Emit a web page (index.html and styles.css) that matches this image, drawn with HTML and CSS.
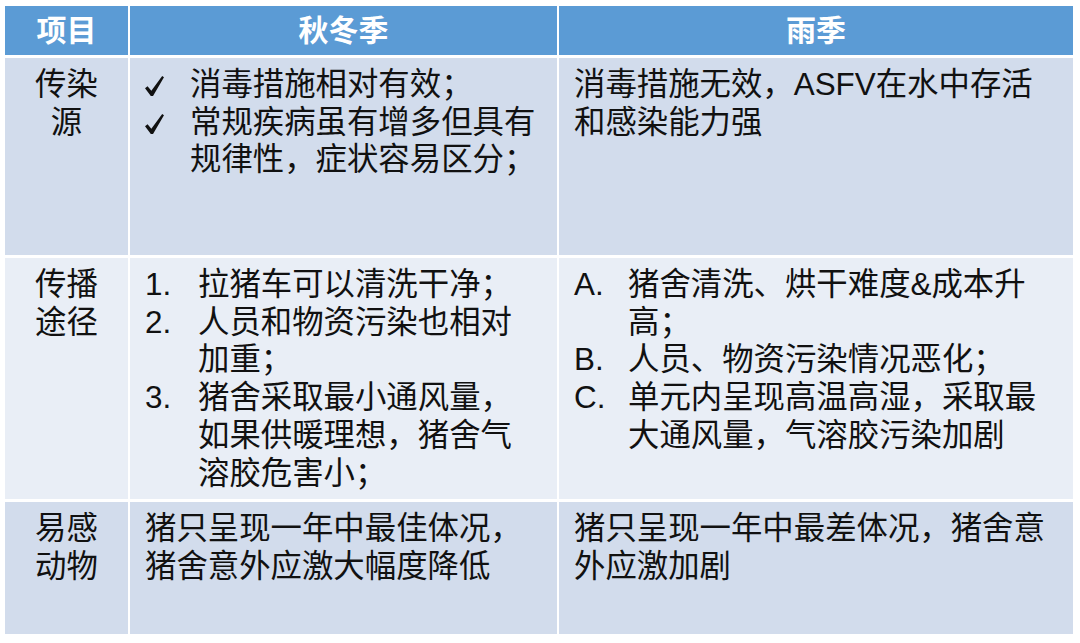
FILE: index.html
```html
<!DOCTYPE html>
<html lang="zh-CN">
<head>
<meta charset="utf-8">
<title>非洲猪瘟 季节对比</title>
<link rel="stylesheet" href="styles.css">
</head>
<body>
<div class="table">
  <div class="cell head">项目</div>
  <div class="cell head">秋冬季</div>
  <div class="cell head">雨季</div>

  <div class="cell c1 odd">传染源</div>
  <div class="cell odd">
    <div class="item check"><span class="mark"><svg viewBox="0 0 18 19" width="19" height="20"><path d="M0 11.6 L2.4 9.8 L6 14 L16.3 0 L18 1.3 L7.6 19 L5.5 19 Z" fill="#111"/></svg></span><span class="txt">消毒措施相对有效；</span></div>
    <div class="item check"><span class="mark"><svg viewBox="0 0 18 19" width="19" height="20"><path d="M0 11.6 L2.4 9.8 L6 14 L16.3 0 L18 1.3 L7.6 19 L5.5 19 Z" fill="#111"/></svg></span><span class="txt">常规疾病虽有增多但具有规律性，症状容易区分；</span></div>
  </div>
  <div class="cell odd c3">消毒措施无效，ASFV在水中存活和感染能力强</div>

  <div class="cell c1 even">传播途径</div>
  <div class="cell even">
    <div class="item num"><span class="mark">1.</span><span class="txt">拉猪车可以清洗干净；</span></div>
    <div class="item num"><span class="mark">2.</span><span class="txt">人员和物资污染也相对加重；</span></div>
    <div class="item num"><span class="mark">3.</span><span class="txt">猪舍采取最小通风量，如果供暖理想，猪舍气溶胶危害小；</span></div>
  </div>
  <div class="cell even c3">
    <div class="item num"><span class="mark">A.</span><span class="txt">猪舍清洗、烘干难度&amp;成本升高；</span></div>
    <div class="item num"><span class="mark">B.</span><span class="txt">人员、物资污染情况恶化；</span></div>
    <div class="item num"><span class="mark">C.</span><span class="txt">单元内呈现高温高湿，采取最大通风量，气溶胶污染加剧</span></div>
  </div>

  <div class="cell c1 odd">易感动物</div>
  <div class="cell odd">猪只呈现一年中最佳体况，猪舍意外应激大幅度降低</div>
  <div class="cell odd c3">猪只呈现一年中最差体况，猪舍意外应激加剧</div>
</div>
</body>
</html>
```

FILE: styles.css
```css
html, body {
  margin: 0;
  padding: 0;
  background: #ffffff;
}
body {
  padding: 6px 0 0 5px;
  font-family: "Liberation Sans", "Noto Sans CJK SC", sans-serif;
  color: #111111;
}
.table {
  display: grid;
  grid-template-columns: 123px 427px 514px;
  grid-template-rows: 49px 197px 241px 132px;
  column-gap: 2px;
  row-gap: 3px;
  width: 1068px;
}
.cell {
  font-size: 31.4px;
  line-height: 37.7px;
  padding: 8px 15px 0 15px;
  box-sizing: border-box;
  word-break: normal;
  line-break: strict;
}
.c3 {
  padding-right: 14px;
}
.head {
  background: #5b9bd5;
  color: #ffffff;
  font-weight: bold;
  font-size: 30px;
  display: flex;
  align-items: center;
  justify-content: center;
  padding: 1px 0 0 0;
  margin-bottom: 2px;
  height: 49px;
}
.odd {
  background: #d2dcec;
}
.even {
  background: #e9eef6;
}
.c1 {
  text-align: center;
  padding-left: 20px;
  padding-right: 20px;
}
.item {
  display: flex;
  align-items: flex-start;
}
.item .txt {
  flex: 1;
}
.check .mark {
  width: 45px;
  flex: none;
  display: flex;
  align-items: center;
  height: 37.7px;
  padding-top: 2px;
  box-sizing: border-box;
}
.check .mark svg {
  display: block;
}
.num .mark {
  width: 53px;
  flex: none;
}
.c3 .num .mark {
  width: 54px;
}
```
